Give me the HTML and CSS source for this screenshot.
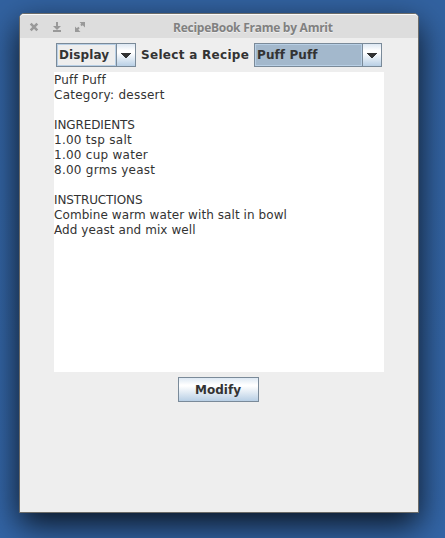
FILE: index.html
```html
<!DOCTYPE html>
<html lang="en">
<head>
<meta charset="utf-8">
<title>RecipeBook Frame by Amrit</title>
<link rel="stylesheet" href="styles.css">
</head>
<body>
<main class="window">
  <header class="titlebar">
    <svg class="controls" width="66" height="24" viewBox="0 0 66 24">
      <g fill="none" stroke="#999">
        <path stroke-width="2.6" d="M10.7 8.7l6.6 6.6M17.3 8.7l-6.6 6.6"/>
        <path stroke-width="2" d="M37 7v6M33 16h8"/>
        <path stroke-width="2" d="M56 15.500l3-3M61 10.500l3-3"/>
      </g>
      <g fill="#999">
        <path d="M33 11h8l-4 4z"/>
        <path d="M55 11.500v5.500h5.500zM59.500 7h5.500v5.500z"/>
      </g>
    </svg>
    <h1 class="title">RecipeBook Frame by Amrit</h1>
  </header>
  <div class="toolbar">
    <div class="combo combo-action">
      <span class="value">Display</span>
      <span class="arrow"><svg width="10" height="5" viewBox="0 0 10 5" shape-rendering="crispEdges"><path fill="#333" d="M0 0h10v1h-1v1h-1v1h-1v1h-1v1h-2v-1h-1v-1h-1v-1h-1v-1h-1z"/></svg></span>
    </div>
    <span class="label">Select a Recipe</span>
    <div class="combo combo-recipe focused">
      <span class="value">Puff Puff</span>
      <span class="arrow"><svg width="10" height="5" viewBox="0 0 10 5" shape-rendering="crispEdges"><path fill="#333" d="M0 0h10v1h-1v1h-1v1h-1v1h-1v1h-2v-1h-1v-1h-1v-1h-1v-1h-1z"/></svg></span>
    </div>
  </div>
  <pre class="recipe"><span class="name">Puff Puff</span>
<span class="category">Category: dessert</span>

<span class="heading">INGREDIENTS</span>
<span class="item">1.00 tsp salt
1.00 cup water
8.00 grms yeast</span>

<span class="heading">INSTRUCTIONS</span>
<span class="step">Combine warm water with salt in bowl
Add yeast and mix well</span></pre>
  <button class="modify">Modify</button>
</main>
</body>
</html>
```
FILE: styles.css
```css
* { box-sizing: border-box; }
html { height: 100%; }
body {
  margin: 0;
  height: 538px;
  padding: 13px 0 0 19px;
  overflow: hidden;
  background: linear-gradient(#3262a0, #3365a6);
  font: 12px/15px "DejaVu Sans", sans-serif;
  color: #333;
}
.window {
  width: 400px;
  height: 500px;
  display: flex;
  flex-direction: column;
  border: 1px solid #6b6b68;
  border-radius: 5px 5px 0 0;
  background: #eee;
  box-shadow: 0 12px 32px rgba(0, 0, 0, .8);
}
.titlebar {
  height: 24px;
  flex: none;
  display: flex;
  border-top: 1px solid #fafafa;
  border-radius: 4px 4px 0 0;
  background: #ddd;
}
.controls { flex: none; margin-right: 87px; }
.title {
  margin: 0;
  font: bold 12px/25px "Open Sans", sans-serif;
  letter-spacing: -.26px;
  color: #808080;
  text-shadow: 0 1px #eee;
  white-space: nowrap;
}
.toolbar {
  display: flex;
  height: 24px;
  margin: 5px 0 5px 36px;
  font-weight: bold;
}
.combo {
  display: flex;
  border: 1px solid #7a8a99;
}
.combo-action { width: 80px; }
.combo-recipe { width: 128px; }
.value {
  flex: 1;
  border: 1px solid #b8cfe5;
  padding: 0 1px;
  line-height: 20px;
  letter-spacing: .1px;
  white-space: nowrap;
}
.focused .value { background: #a3b8cc; }
.arrow {
  width: 19px;
  flex: none;
  display: flex;
  align-items: center;
  justify-content: center;
  border-left: 1px solid #7a8a99;
  background: linear-gradient(#dde8f3, #fff 30%, #fff 40%, #b8cfe5);
}
.label {
  width: 118px;
  padding-left: 5px;
  line-height: 24px;
  letter-spacing: .3px;
  white-space: nowrap;
}
.recipe {
  width: 330px;
  height: 300px;
  margin: 0 0 5px 34px;
  padding-top: 1px;
  font: inherit;
  background: #fff;
}
.name { letter-spacing: .22px; }
.category { letter-spacing: .26px; }
.heading { letter-spacing: -.12px; }
.item { letter-spacing: .26px; }
.step { letter-spacing: .08px; }
.modify {
  width: 81px;
  height: 25px;
  margin-left: 158px;
  padding: 0 1px 0 0;
  border: 1px solid #7a8a99;
  background: linear-gradient(#dde8f3, #fff 30%, #fff 35%, #b8cfe5);
  font: bold 12px "DejaVu Sans", sans-serif;
  color: #333;
}
```
